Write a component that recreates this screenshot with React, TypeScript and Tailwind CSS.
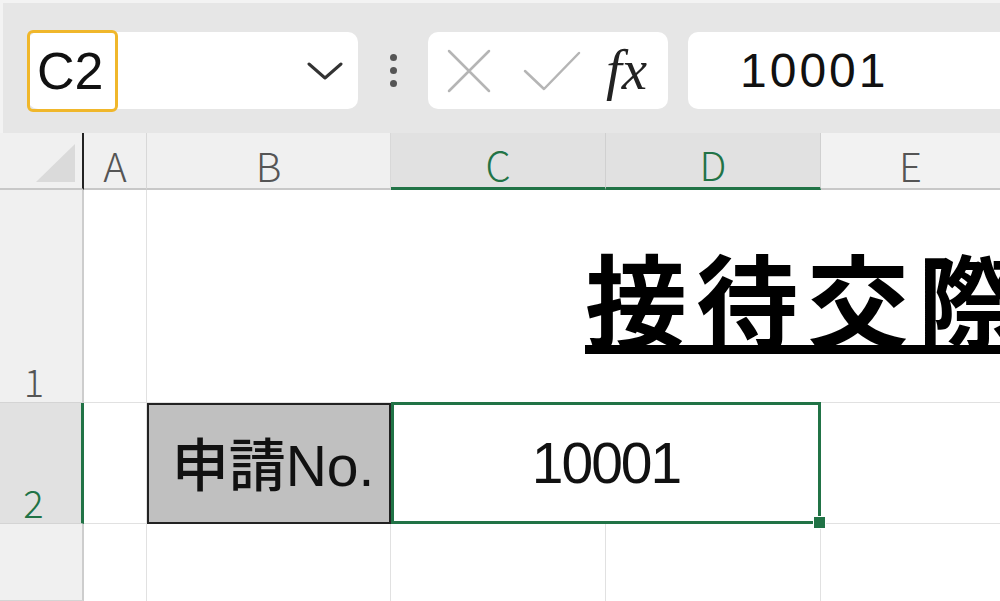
import React from "react";

export default function App() {
  return (
    <div className="w-[1000px] h-[601px] overflow-hidden bg-white flex flex-col font-['Liberation_Sans','Noto_Sans_CJK_JP',sans-serif] text-[#111]">
      {/* Formula bar area */}
      <div className="h-[133px] shrink-0 bg-[#e6e6e6] border-t-[3px] border-l-[3px] border-[#f3f3f3] flex items-start pt-[29px] pl-[25px]">
        {/* Name box */}
        <div className="w-[330px] h-[77px] shrink-0 bg-white rounded-[10px] flex items-center">
          <div className="w-[91px] h-[82px] -ml-[1px] border-[3px] border-[#f0b72b] rounded-[6px] flex items-center pl-[7px] text-[52px] leading-none text-[#111]">
            C2
          </div>
          <svg className="ml-auto mr-[15px]" width="36" height="20" viewBox="0 0 36 20">
            <path d="M2 3 L18 17 L34 3" fill="none" stroke="#333" strokeWidth="3" strokeLinecap="round" strokeLinejoin="round" />
          </svg>
        </div>
        {/* vertical dots */}
        <div className="w-[70px] h-[77px] shrink-0 flex flex-col items-center justify-center gap-[6px]">
          <div className="w-[7px] h-[7px] rounded-full bg-[#555]" />
          <div className="w-[7px] h-[7px] rounded-full bg-[#555]" />
          <div className="w-[7px] h-[7px] rounded-full bg-[#555]" />
        </div>
        {/* cancel / enter / fx */}
        <div className="w-[240px] h-[77px] shrink-0 bg-white rounded-[10px] flex items-center pl-[18px]">
          <svg width="46" height="46" viewBox="0 0 46 46">
            <path d="M3 3 L43 43 M43 3 L3 43" stroke="#b5b5b5" strokeWidth="2.5" strokeLinecap="round" />
          </svg>
          <svg className="ml-[30px]" width="60" height="44" viewBox="0 0 60 44">
            <path d="M3 22 L22 40 L57 4" fill="none" stroke="#b5b5b5" strokeWidth="2.5" strokeLinecap="round" strokeLinejoin="round" />
          </svg>
          <span className="ml-[24px] font-['Liberation_Serif',serif] italic text-[57px] leading-none text-[#222] -mt-[2px]">
            fx
          </span>
        </div>
        {/* formula input */}
        <div className="ml-[20px] flex-1 -mr-[20px] h-[77px] bg-white rounded-[10px] flex items-center pl-[52px]">
          <span className="text-[48px] leading-none tracking-[3px] text-[#111]">10001</span>
        </div>
      </div>

      {/* Sheet grid */}
      <div className="flex-1 grid grid-cols-[84px_63px_244px_215px_215px_1fr] grid-rows-[57px_213px_121px_1fr]">
        {/* Header row */}
        <div className="relative bg-[#f0f0f0] border-r-2 border-r-[#222] border-b-2 border-b-[#c8c8c8]">
          <svg className="absolute left-[36px] top-[11px]" width="40" height="40" viewBox="0 0 40 40">
            <path d="M39 0 L39 38 L0 38 Z" fill="#dadada" />
          </svg>
        </div>
        <HeaderCell label="A" />
        <HeaderCell label="B" />
        <HeaderCell label="C" selected />
        <HeaderCell label="D" selected />
        <HeaderCell label="E" last />

        {/* Row 1 */}
        <RowHeader label="1" />
        <div className="border-r border-b border-[#e1e1e1]" />
        <div className="col-span-4 border-b border-[#e1e1e1] overflow-hidden pt-[56px] pl-[438px]">
          <span className="inline-block whitespace-nowrap font-['Noto_Sans_CJK_JP',sans-serif] font-bold text-[102px] leading-none tracking-[9px] text-black underline decoration-[9px] underline-offset-[4px] decoration-black [text-decoration-skip-ink:none]">
            接待交際費申請書
          </span>
        </div>

        {/* Row 2 */}
        <RowHeader label="2" selected />
        <div className="border-r border-b border-[#e1e1e1]" />
        <div className="bg-[#c0c0c0] border-2 border-[#222] flex items-center justify-center pl-[8px]">
          <span className="text-[57px] leading-none font-['Liberation_Sans','Noto_Sans_CJK_JP',sans-serif] text-[#111]">
            <span className="font-['Noto_Sans_CJK_JP',sans-serif] font-medium">申請</span>No.
          </span>
        </div>
        <div className="col-span-2 relative border-[3px] border-[#217346] flex items-center justify-center -mt-[1px]">
          <span className="text-[57px] leading-none tracking-[-2px] text-[#111]">10001</span>
          <div className="absolute -right-[8px] -bottom-[8px] w-[13px] h-[13px] bg-[#217346] border border-white" />
        </div>
        <div className="border-b border-[#e1e1e1]" />

        {/* Row 3 */}
        <RowHeader label="" />
        <div className="border-r border-[#e1e1e1]" />
        <div className="border-r border-[#e1e1e1]" />
        <div className="border-r border-[#e1e1e1]" />
        <div className="border-r border-[#e1e1e1]" />
        <div />
      </div>
    </div>
  );
}

function HeaderCell({ label, selected, last }: { label: string; selected?: boolean; last?: boolean }) {
  return (
    <div
      className={
        selected
          ? "bg-[#e1e1e1] border-r border-r-[#d0d0d0] border-b-[3px] border-b-[#217346] flex items-center justify-center pt-[8px]"
          : last
          ? "bg-[#f2f2f2] border-b-2 border-b-[#c8c8c8] flex items-center justify-center pt-[8px]"
          : "bg-[#f0f0f0] border-r border-r-[#d8d8d8] border-b-2 border-b-[#c8c8c8] flex items-center justify-center pt-[8px]"
      }
    >
      <span
        className={
          selected
            ? "font-['Noto_Sans_CJK_JP',sans-serif] font-light text-[40px] leading-none text-[#217346]"
            : "font-['Noto_Sans_CJK_JP',sans-serif] font-light text-[40px] leading-none text-[#555]"
        }
      >
        {label}
      </span>
    </div>
  );
}

function RowHeader({ label, selected }: { label: string; selected?: boolean }) {
  return (
    <div
      className={
        selected
          ? "bg-[#e1e1e1] border-r-[3px] border-r-[#217346] border-b border-b-[#d4d4d4] flex items-end justify-center pr-[14px] pb-[2px]"
          : "bg-[#f0f0f0] border-r-2 border-r-[#cdcdcd] border-b border-b-[#d4d4d4] flex items-end justify-center pr-[14px] pb-[2px]"
      }
    >
      <span
        className={
          selected
            ? "font-['Noto_Sans_CJK_JP',sans-serif] font-light text-[38px] leading-none text-[#217346]"
            : "font-['Noto_Sans_CJK_JP',sans-serif] font-light text-[38px] leading-none text-[#555]"
        }
      >
        {label}
      </span>
    </div>
  );
}
